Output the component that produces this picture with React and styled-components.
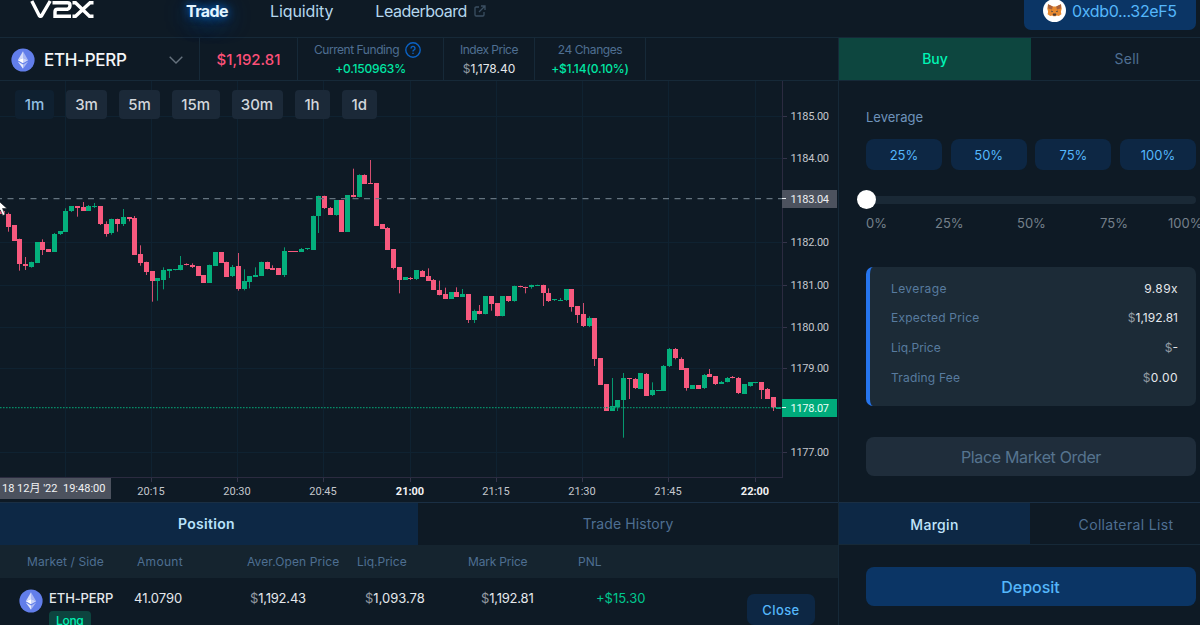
import styled, { createGlobalStyle, css } from 'styled-components';

const GlobalStyle = createGlobalStyle`
  * {
    box-sizing: border-box;
  }

  body {
    margin: 0;
    overflow: hidden;
    background: #0e1a25;
    color: #e8eef5;
    font-family: 'Inter', 'Noto Sans CJK SC', sans-serif;
  }

  button {
    border: 0;
    padding: 0;
    font-family: inherit;
    cursor: pointer;
  }
`;

const line = '#162938';

const Page = styled.div`
  width: 1200px;
  height: 625px;
  overflow: hidden;
`;

const Text = styled.span`
  display: inline-block;
  flex-shrink: 0;
  white-space: nowrap;
  font-size: ${({ $size = 13 }) => $size}px;
  line-height: ${({ $line = 18 }) => $line}px;
  font-weight: ${({ $weight = 400 }) => $weight};
  letter-spacing: ${({ $track = 0 }) => $track}px;
  color: ${({ $color = '#e4e8ec' }) => $color};
`;

const Dollar = styled.span`
  color: #9199a1;
`;

/* header */

const Header = styled.header`
  display: flex;
  align-items: flex-start;
  height: 37px;
  padding-left: 30px;
`;

const Logo = styled.svg`
  display: block;
  flex-shrink: 0;
  width: 65px;
  height: 20px;
`;

const Nav = styled.nav`
  display: flex;
  gap: 42px;
  padding: 0 0 0 91px;
  width: 929px;
`;

const NavItem = styled.a`
  display: flex;
  align-items: center;
  gap: 7px;
  height: 22px;
  white-space: nowrap;
  font-size: 16px;
  letter-spacing: ${({ $track = 0 }) => $track}px;
  color: #b5d7ee;

  ${({ $active }) =>
    $active &&
    css`
      font-weight: 700;
      color: #e3f5ff;
      text-shadow: 0 0 9px #0976e8, 0 4px 22px #0a62c4;
    `};
`;

const Wallet = styled.button`
  display: flex;
  align-items: flex-start;
  gap: 6px;
  width: 172px;
  height: 30px;
  padding-left: 19px;
  border-radius: 0 0 7px 7px;
  background: #0b3565;
`;

/* columns */

const Body = styled.main`
  display: grid;
  grid-template-columns: 839px 385px;
  height: 588px;
  border-top: 1px solid ${line};
`;

const Left = styled.section`
  border-right: 1px solid ${line};
`;

const MarketBar = styled.div`
  display: flex;
  height: 43px;
  border-bottom: 1px solid ${line};
`;

const MarketCell = styled.div`
  display: flex;
  align-items: center;
  width: ${({ $width }) => $width}px;
  padding-top: 2px;
  border-right: 1px solid ${line};
  ${({ $stacked }) =>
    $stacked
      ? css`
          flex-direction: column;
        `
      : css`
          justify-content: center;
        `};
`;

const MarketSelect = styled(MarketCell)`
  justify-content: flex-start;
  padding: 1px 16px 0 11px;
  gap: 9px;

  svg:last-child {
    margin-left: auto;
  }
`;

const InlineRow = styled.div`
  display: flex;
  align-items: center;
  gap: 6px;
  margin-right: 6px;
`;

const ChartArea = styled.div`
  position: relative;
  height: 421px;
`;

const ChartSvg = styled.svg`
  display: block;
  font-family: 'Roboto', 'Noto Sans CJK SC', sans-serif;
  font-size: 11px;
`;

const PriceLabels = styled.g`
  letter-spacing: -0.25px;
`;

const Intervals = styled.div`
  position: absolute;
  top: 9px;
  left: 15px;
  display: flex;
  gap: 12px;
`;

const Interval = styled.button`
  width: ${({ $width }) => $width}px;
  height: 29px;
  border-radius: 4px;
  font-size: 15px;
  font-weight: 500;
  color: ${({ $active }) => ($active ? '#8fbfe3' : '#d2d6db')};
  background: ${({ $active }) => ($active ? '#0f2030' : '#1b2938')};
`;

const Tabs = styled.div`
  display: flex;
  height: ${({ $height }) => $height}px;
  border-top: ${({ $top }) => ($top ? 1 : 0)}px solid #1a2f44;
  border-bottom: ${({ $bottom }) => ($bottom ? 1 : 0)}px solid ${line};
`;

const Tab = styled.button`
  flex: none;
  width: ${({ $width }) => $width}px;
  padding: ${({ $padding = 0 }) => $padding};
  background: ${({ $fill = 'transparent' }) => $fill};
`;

const TableHead = styled.div`
  display: grid;
  grid-template-columns: 110px 110px 110px 111px 110px 1fr;
  align-items: center;
  height: 33px;
  padding: 1px 0 0 27px;
  background: #15242f;
`;

const TableRow = styled.div`
  display: grid;
  grid-template-columns: 115px 116px 115px 116px 115px 151px 68px;
  align-items: start;
  padding: 11px 0 0 19px;
`;

const Market = styled.div`
  display: flex;
  gap: 6px;

  svg {
    flex-shrink: 0;
  }
`;

const MarketInfo = styled.div`
  display: flex;
  flex-direction: column;
  align-items: flex-start;
  gap: 4px;
`;

const Side = styled.span`
  height: 20px;
  padding: 0 7px;
  border-radius: 4px;
  background: #0d443f;
  font-size: 12px;
  line-height: 20px;
  font-weight: 500;
  letter-spacing: -0.3px;
  color: #00f0b0;
`;

const CloseButton = styled.button`
  height: 31px;
  margin-top: 5px;
  padding-top: 1px;
  border-radius: 7px;
  background: #0d2744;
`;

/* order panel */

const OrderForm = styled.div`
  display: flex;
  flex-direction: column;
  width: 357px;
  height: 421px;
  padding: 27px 0 0 27px;
`;

const Presets = styled.div`
  display: grid;
  grid-template-columns: repeat(4, 76px);
  gap: 8.7px;
  margin-top: 13px;
`;

const Preset = styled.button`
  height: 31px;
  border-radius: 8px;
  background: #0d2744;
`;

const Slider = styled.div`
  display: flex;
  align-items: center;
  height: 19px;
  margin-top: 20px;
`;

const Thumb = styled.span`
  position: relative;
  z-index: 1;
  flex: none;
  width: 19px;
  height: 19px;
  margin-left: -9px;
  border-radius: 50%;
  background: #fff;
`;

const Track = styled.span`
  flex: 1;
  height: 8px;
  margin-left: -5px;
  border-radius: 0 4px 4px 0;
  background: #1a2936;
`;

const Marks = styled.div`
  display: grid;
  grid-template-columns: 69px 82px 83px 68px 40px;
  margin-top: 5px;
`;

const Summary = styled.div`
  display: flex;
  flex-direction: column;
  gap: 11.7px;
  height: 139px;
  margin-top: 35px;
  padding: 12.6px 18px 0 21px;
  border-left: 4px solid #2675ee;
  border-radius: 7px;
  background: #1c2b37;
`;

const SummaryRow = styled.div`
  display: flex;
  justify-content: space-between;
`;

const WideButton = styled.button`
  display: block;
  width: 330px;
  height: 39px;
  margin: ${({ $margin }) => $margin};
  border-radius: 8px;
  background: ${({ $fill }) => $fill};
`;

/* One row per minute: high, body top, body bottom, low, u(p) or d(own), in thirds of a pixel from `base`. */
const SERIES = [
  {
    base: 69,
    rows: `182 182 193 193 d,188 191 231 245 d,226 226 272 272 d,266 266 343 362 d,321 341 349 360 d,335 335 350 353 u,277 277 338 338 u,268 277 300 315 d,297 297 306 306 d,249 252 306 306 u,243 243 251 255 u,175 183 245 245 u,168 168 182 186 u,168 168 174 200 d,156 171 182 182 d,165 168 182 182 u,159 168 171 174 u,168 168 222 225 d,214 222 251 260 d,206 206 249 254 u,206 206 222 245 d,177 201 222 228 u,201 201 206 214 d,198 204 315 315 d,286 312 338 347 d,335 335 366 375 d,363 363 392 455 d,384 384 393 452 u,352 360 389 418 u,357 357 362 384 u,357 357 361 361 u,318 344 361 361 u,340 342 346 346 d,340 344 351 354 d,349 349 378 378 d,375 375 398 398 d,344 344 398 398 u,306 306 347 347 u,306 306 338 338 d,335 335 380 380 d,345 350 378 381 u,309 349 418 422 d,358 392 418 421 u,378 378 395 415 u,352 375 380 380 u,335 335 378 378 u,335 335 358 358 d,346 355 360 360 d,355 355 375 375 d,292 303 375 381 u,303 303 306 306 d,303 303 306 306 d,294 298 306 306 u,294 294 298 300 u,197 197 300 300 u,137 137 199 249 u,137 137 174 177 d,171 174 194 194 d,151 151 194 197 u,151 151 245 245 d,135 135 245 245 u,56 135 142 142 d,73 76 142 142 u,73 76 101 101 d,30 99 102 102 d,99 99 228 228 d,223 223 237 237 d,231 234 300 300 d,298 298 354 358 d`,
  },
  {
    base: 119,
    rows: `202 202 240 280 d,231 231 240 240 u,231 234 237 240 d,210 210 237 240 u,210 213 231 231 d,205 228 243 243 d,237 240 270 270 d,242 269 286 286 d,263 282 297 297 d,276 276 297 297 u,262 276 291 291 d,267 282 291 291 u,282 282 360 369 d,329 332 360 369 u,315 332 343 343 d,289 289 343 343 u,289 289 311 332 d,309 309 349 349 d,289 289 349 349 u,289 289 303 306 d,257 257 303 305 u,257 257 262 262 d,260 260 264 280 d,254 254 262 266 u,254 254 257 257 u,254 254 280 318 d,265 278 303 306 d,297 297 300 303 u,294 300 303 303 u,267 267 300 303 u,267 267 320 335 d,318 318 345 369 d,309 342 378 381 d,349 354 378 381 u`,
  },
  {
    base: 219,
    rows: `54 54 178 198 d,175 175 255 255 d,252 252 333 333 d,234 318 333 333 u,300 300 321 333 u,219 234 300 413 u,234 234 237 297 d,234 237 264 267 d,219 219 267 267 u,219 222 288 288 d,247 270 284 288 u,270 270 273 273 u,195 198 272 272 u,144 147 198 201 u,144 147 174 178 d,172 177 210 210 d,204 204 264 272 d,255 255 267 267 u,255 255 267 267 d,222 225 264 267 u,207 222 230 230 d,228 228 252 255 d,243 246 252 252 u,231 234 247 247 u,228 231 235 235 d,231 234 279 282 d,252 252 282 282 u,247 247 258 260 u,246 246 250 250 u,247 247 270 297 d,264 267 297 297 d,291 291 324 333 d,322 322 326 326 u`,
  },
];

const candles = SERIES.flatMap(({ base, rows }) =>
  rows.split(',').map(row => {
    const [high, top, bottom, low, dir] = row.split(' ');
    const y = v => base + v / 3;
    return {
      high: y(high),
      top: Math.round(y(top)),
      bottom: Math.round(y(bottom)),
      low: y(low),
      color: dir === 'u' ? '#04af7c' : '#f7597e',
    };
  })
);

const PRICES = [
  [35, '1185.00'],
  [77, '1184.00'],
  [161, '1182.00'],
  [204, '1181.00'],
  [246, '1180.00'],
  [287, '1179.00'],
  [371, '1177.00'],
];

const TIMES = [
  [65, ''],
  [151, '20:15'],
  [237, '20:30'],
  [323, '20:45'],
  [410, '21:00'],
  [496, '21:15'],
  [582, '21:30'],
  [668, '21:45'],
  [755, '22:00'],
];

const EthIcon = ({ size = 24 }) => (
  <svg width={size} height={size} viewBox="0 0 24 24">
    <circle cx="12" cy="12" r="11.6" fill="#627eea" />
    <path d="M12 3.2 6.8 12.2 12 9.9z" fill="#d5dcfa" />
    <path d="M12 3.2 17.2 12.2 12 9.9z" fill="#a9b8f4" />
    <path d="M6.8 12.2 12 9.9v5.4z" fill="#fff" />
    <path d="M17.2 12.2 12 9.9v5.4z" fill="#cbd4f9" />
    <path d="M6.8 13.4 12 16.4v4.4z" fill="#e6ebfd" />
    <path d="M17.2 13.4 12 16.4v4.4z" fill="#a9b8f4" />
  </svg>
);

const FoxIcon = () => (
  <svg width="23" height="22" viewBox="0 0 23 22">
    <circle cx="11.5" cy="10.5" r="11.5" fill="#fff" />
    <path d="M5 4.2 9.8 6.6h3.4L18 4.2l.7 4.4-.8 3.2.5 2.5-2.6 1.7-2-.5-1.2.8h-2.2l-1.2-.8-2 .5-2.6-1.7.5-2.5-.8-3.2z" fill="#e8892f" />
    <path d="M5 4.2 9.8 6.6 9 9.5 5.2 8.6zM18 4.2l-4.8 2.4.8 2.9 3.8-.9z" fill="#a8613c" />
    <path d="m8.2 10.6 2 .8-1.6.8zM14.8 10.6l-2 .8 1.6.8z" fill="#35414c" />
    <path d="M10.1 13.6h2.8l.4 1.5-1 .7h-1.6l-1-.7z" fill="#4a3a35" />
  </svg>
);

const Chart = () => (
  <ChartSvg width="838" height="421" viewBox="0 0 838 421">
    <g shapeRendering="crispEdges">
      {TIMES.map(([x]) => (
        <path key={x} d={`M${x + 0.5} 0V396`} stroke="#0f2231" />
      ))}
      {PRICES.map(([y]) => (
        <path key={y} d={`M0 ${y + 0.5}H782`} stroke="#0f2231" />
      ))}
      <path d="M0 396.5H782.5V0" fill="none" stroke="#2b2b40" />
      {PRICES.map(([y]) => (
        <path key={y} d={`M783 ${y + 0.5}h4`} stroke="#34344a" />
      ))}
      {TIMES.map(([x]) => (
        <path key={x} d={`M${x + 0.5} 397v4`} stroke="#34344a" />
      ))}
    </g>
    {candles.map(({ high, top, bottom, low, color }, i) => {
      const x = Math.round(2 + i * 5.75);
      return (
        <g key={i} fill={color}>
          <rect x={x} y={high} width="1" height={Math.max(low - high, 1)} opacity="0.85" />
          <rect x={x - 2} y={top} width="5" height={Math.max(bottom - top, 1)} />
        </g>
      );
    })}
    <path d="M-4 117.6H782" stroke="#64737f" strokeWidth="1.4" strokeDasharray="6 5.5" />
    <path d="M0 326.6H782" stroke="#078a67" strokeWidth="1.4" strokeDasharray="1.6 1.4" />
    <rect x="782" y="109" width="55" height="18" fill="#4c525e" />
    <rect x="782" y="318" width="55" height="18" fill="#00ab7b" />
    <path d="M782 117.5h4M782 326.5h4" stroke="#e7edf0" />
    <PriceLabels fill="#c4c7cd">
      {PRICES.map(([y, label]) => (
        <text key={label} x="790.5" y={y + 4}>
          {label}
        </text>
      ))}
      <text x="790.5" y="121.5" fill="#eceef0">1183.04</text>
      <text x="790.5" y="330.5" fill="#eafff8">1178.07</text>
    </PriceLabels>
    {TIMES.map(([x, label]) => (
      <text
        key={x}
        x={x}
        y="413.5"
        textAnchor="middle"
        fontWeight={label.endsWith(':00') ? 700 : 400}
        fill={label.endsWith(':00') ? '#f1f2f4' : '#c4c7cd'}
      >
        {label}
      </text>
    ))}
    <rect y="397" width="111" height="21" fill="#4c525e" />
    <text x="2" y="411" fill="#f1f2f4">18 12月 '22</text>
    <text x="63" y="411" fill="#f1f2f4">19:48:00</text>
    <path d="M-4 117.5 7 127.5H2.5L5 133.5l-2.2 1L.3 129-4 132z" fill="#fff" stroke="#1a1f25" strokeWidth=".6" />
  </ChartSvg>
);

const muted = '#4e6f92';
const green = '#00e6a4';
const blue = '#55b7fb';

const App = () => (
  <Page>
    <GlobalStyle />
    <Header>
      <Logo viewBox="0 0 65 20" fill="none" stroke="#fff" strokeWidth="3.4">
        <path d="M1.8 1 9.6 16.3H11.2L20.2 1" strokeLinejoin="bevel" />
        <path d="M22.5 2.8H37.5Q40 2.8 40 5.5T37.5 9.3H27.5Q25 9.3 25 12V16.3H41" />
        <path d="M42.5 2.7H45.5L59.5 16.3h4M63.5 2.7H60L45.5 16.3H42.5" />
      </Logo>
      <Nav>
        <NavItem $active $track={-0.6}>Trade</NavItem>
        <NavItem $track={-0.1}>Liquidity</NavItem>
        <NavItem $track={-0.5}>
          Leaderboard
          <svg width="12" height="12" viewBox="0 0 12 12" fill="none" stroke="#3b4f62" strokeWidth="1.3">
            <path d="M5 2H2.2Q1 2 1 3.2v6.6Q1 11 2.2 11h6.6q1.2 0 1.2-1.2V7M7 1h4v4M11 1 5 7" />
          </svg>
        </NavItem>
      </Nav>
      <Wallet>
        <FoxIcon />
        <Text $size={16} $line={22} $track={-0.35} $color={blue}>0xdb0...32eF5</Text>
      </Wallet>
    </Header>
    <Body>
      <Left>
        <MarketBar>
          <MarketSelect $width={200}>
            <EthIcon />
            <Text $size={17} $weight={500} $track={-0.3} $color="#f4f6f8">ETH-PERP</Text>
            <svg width="14" height="8" viewBox="0 0 14 8" fill="none" stroke="#66727e" strokeWidth="1.4">
              <path d="M.7.7 7 7 13.3.7" />
            </svg>
          </MarketSelect>
          <MarketCell $width={98}>
            <Text $size={15} $weight={500} $color="#fb5078">$1,192.81</Text>
          </MarketCell>
          <MarketCell $width={146} $stacked>
            <InlineRow>
              <Text $size={12} $line={19} $track={-0.45} $color={muted}>Current Funding</Text>
              <svg width="16" height="16" viewBox="0 0 16 16" fill="none" stroke="#0b62c4" strokeWidth="1.4">
                <circle cx="8" cy="8" r="7.2" />
                <path d="M6 6.4a2 2 0 1 1 2.8 1.8q-.8.4-.8 1.3M8 10.8v1.3" />
              </svg>
            </InlineRow>
            <Text $size={12} $line={19} $weight={500} $track={-0.2} $color={green}>+0.150963%</Text>
          </MarketCell>
          <MarketCell $width={91} $stacked>
            <Text $size={12} $line={19} $track={-0.5} $color={muted}>Index Price</Text>
            <Text $size={12} $line={19}><Dollar>$</Dollar>1,178.40</Text>
          </MarketCell>
          <MarketCell $width={111} $stacked>
            <Text $size={12} $line={19} $track={-0.4} $color={muted}>24 Changes</Text>
            <Text $size={12} $line={19} $weight={500} $track={-0.15} $color={green}>+$1.14(0.10%)</Text>
          </MarketCell>
        </MarketBar>
        <ChartArea>
          <Chart />
          <Intervals>
            <Interval $width={39} $active>1m</Interval>
            <Interval $width={41}>3m</Interval>
            <Interval $width={41}>5m</Interval>
            <Interval $width={47.5}>15m</Interval>
            <Interval $width={51}>30m</Interval>
            <Interval $width={35}>1h</Interval>
            <Interval $width={35.5}>1d</Interval>
          </Intervals>
        </ChartArea>
        <Tabs $height={43} $top>
          <Tab $width={418} $fill="#0d2845" $padding="0 5px 0 0">
            <Text $size={14} $weight={600} $track={0.3} $color="#b9e2fb">Position</Text>
          </Tab>
          <Tab $width={420}>
            <Text $size={14} $track={0.1} $color={muted}>Trade History</Text>
          </Tab>
        </Tabs>
        <TableHead>
          <Text $size={12} $track={0.1} $color={muted}>Market / Side</Text>
          <Text $size={12} $track={0.3} $color={muted}>Amount</Text>
          <Text $size={12} $track={0.1} $color={muted}>Aver.Open Price</Text>
          <Text $size={12} $color={muted}>Liq.Price</Text>
          <Text $size={12} $track={-0.2} $color={muted}>Mark Price</Text>
          <Text $size={12} $color={muted}>PNL</Text>
        </TableHead>
        <TableRow>
          <Market>
            <EthIcon />
            <MarketInfo>
              <Text $weight={500} $track={-0.1}>ETH-PERP</Text>
              <Side>Long</Side>
            </MarketInfo>
          </Market>
          <Text>41.0790</Text>
          <Text $track={-0.2}><Dollar>$</Dollar>1,192.43</Text>
          <Text><Dollar>$</Dollar>1,093.78</Text>
          <Text $track={-0.2}><Dollar>$</Dollar>1,192.81</Text>
          <Text $color="#00c78e">+$15.30</Text>
          <CloseButton>
            <Text $weight={500} $track={0.4} $color={blue}>Close</Text>
          </CloseButton>
        </TableRow>
      </Left>
      <section>
        <Tabs $height={43} $bottom>
          <Tab $width={192} $fill="#0d463f">
            <Text $size={14} $weight={500} $color="#00f5b5">Buy</Text>
          </Tab>
          <Tab $width={192}>
            <Text $size={14} $track={0.3} $color={muted}>Sell</Text>
          </Tab>
        </Tabs>
        <OrderForm>
          <Text $color="#6e93bb">Leverage</Text>
          <Presets>
            {['25%', '50%', '75%', '100%'].map(value => (
              <Preset key={value}>
                <Text $color={blue}>{value}</Text>
              </Preset>
            ))}
          </Presets>
          <Slider>
            <Thumb />
            <Track />
          </Slider>
          <Marks>
            {['0%', '25%', '50%', '75%', '100%'].map(value => (
              <Text key={value} $color="#75808b">{value}</Text>
            ))}
          </Marks>
          <Summary>
            <SummaryRow>
              <Text $size={12} $track={0.4} $color="#587b9f">Leverage</Text>
              <Text $size={12} $track={0.4}>9.89x</Text>
            </SummaryRow>
            <SummaryRow>
              <Text $size={12} $track={0.2} $color="#587b9f">Expected Price</Text>
              <Text $size={12}><Dollar>$</Dollar>1,192.81</Text>
            </SummaryRow>
            <SummaryRow>
              <Text $size={12} $color="#587b9f">Liq.Price</Text>
              <Text $size={12}><Dollar>$</Dollar>-</Text>
            </SummaryRow>
            <SummaryRow>
              <Text $size={12} $track={0.2} $color="#587b9f">Trading Fee</Text>
              <Text $size={12} $track={0.4}><Dollar>$</Dollar>0.00</Text>
            </SummaryRow>
          </Summary>
          <WideButton $fill="#1f2d3b" $margin="31px 0 0">
            <Text $size={16} $track={-0.35} $color="#56748f">Place Market Order</Text>
          </WideButton>
        </OrderForm>
        <Tabs $height={43} $top $bottom>
          <Tab $width={191} $fill="#0d2845" $padding="3px 0 0">
            <Text $size={14} $weight={500} $track={0.3} $color="#c0e4fb">Margin</Text>
          </Tab>
          <Tab $width={192} $padding="3px 0 0">
            <Text $size={14} $track={0.35} $color={muted}>Collateral List</Text>
          </Tab>
        </Tabs>
        <WideButton $fill="#0b3565" $margin="22px 0 0 26.5px">
          <Text $size={16} $weight={500} $color={blue}>Deposit</Text>
        </WideButton>
      </section>
    </Body>
  </Page>
);

export default App;
